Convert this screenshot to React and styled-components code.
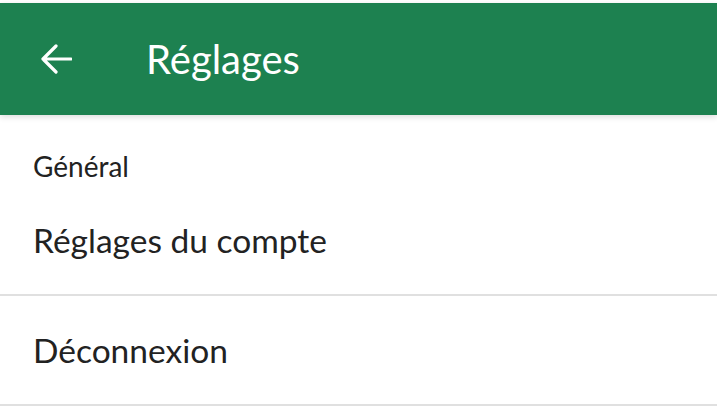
import React from "react";
import styled, { createGlobalStyle } from "styled-components";

const Global = createGlobalStyle`
  html, body { margin: 0; padding: 0; background: #ffffff; }
  body { font-family: Lato, "Open Sans", sans-serif; color: #222222; }
`;

const Page = styled.div`
  padding-top: 3px;
  background: #ffffff;
`;

const Header = styled.header`
  height: 112px;
  background: #1d8150;
  display: flex;
  align-items: center;
  box-shadow: 0 2px 6px rgba(0, 0, 0, 0.14);
  position: relative;
  z-index: 1;
`;

const BackButton = styled.button`
  all: unset;
  width: 32px;
  height: 32px;
  margin-left: 40px;
  display: flex;
  align-items: center;
  justify-content: center;
  cursor: pointer;
`;

const Title = styled.h1`
  margin: 0 0 0 74px;
  font-size: 40px;
  font-weight: 400;
  color: #ffffff;
  line-height: 48px;
`;

const SectionLabel = styled.div`
  padding: 34px 33px 0;
  font-size: 28px;
  line-height: 34px;
  font-weight: 400;
  color: #222222;
`;

const List = styled.div`
  display: flex;
  flex-direction: column;
`;

const Row = styled.div`
  padding: ${(p) => (p.$first ? "37px" : "34px")} 33px 34px;
  font-size: 33.5px;
  line-height: 40px;
  font-weight: 400;
  color: #222222;
  border-bottom: 2px solid #e0e0e0;
`;

function ArrowBack() {
  return (
    <svg width="32" height="32" viewBox="0 0 32 32" fill="none">
      <path
        d="M31 16H3M16 3L3 16l13 13"
        stroke="#ffffff"
        strokeWidth="3.2"
        strokeLinecap="round"
        strokeLinejoin="round"
      />
    </svg>
  );
}

export default function App() {
  return (
    <Page>
      <Global />
      <Header>
        <BackButton aria-label="Retour">
          <ArrowBack />
        </BackButton>
        <Title>Réglages</Title>
      </Header>
      <SectionLabel>Général</SectionLabel>
      <List>
        <Row $first>Réglages du compte</Row>
        <Row>Déconnexion</Row>
      </List>
    </Page>
  );
}
